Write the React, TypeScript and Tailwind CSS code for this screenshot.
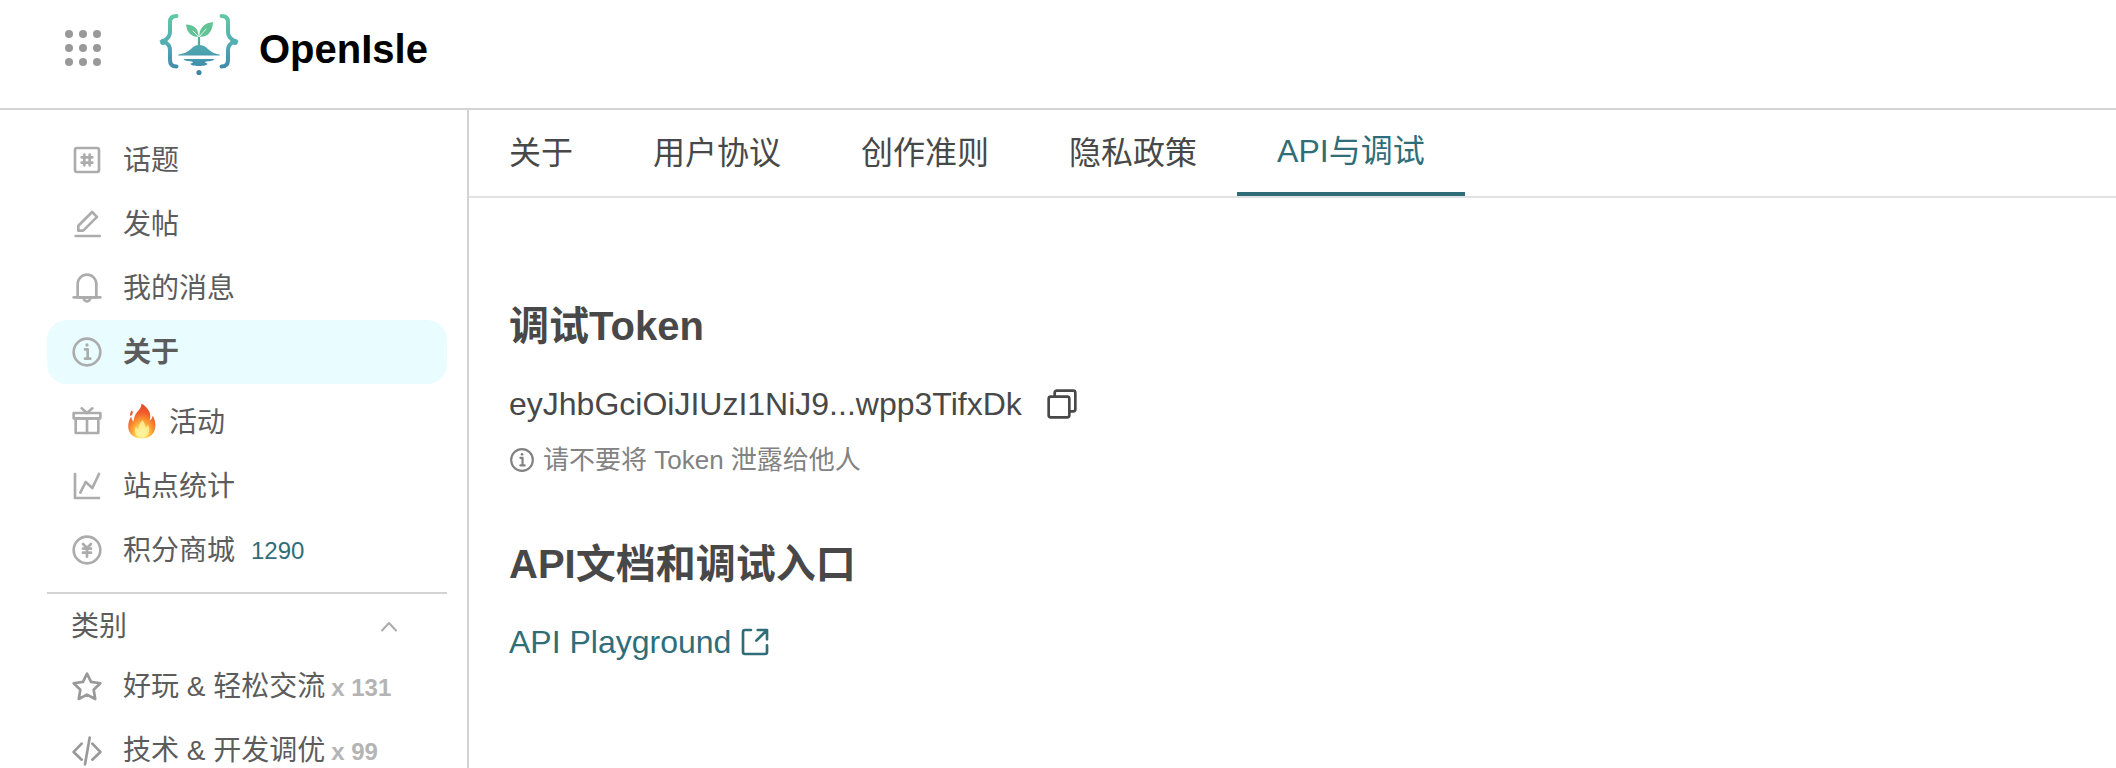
import type { ReactNode } from 'react'

interface IconProps {
  className?: string
  children: ReactNode
}

// 48x48 outline icon, colour follows the text colour
function Icon({ className = 'size-8', children }: IconProps) {
  return (
    <svg
      viewBox="0 0 48 48"
      fill="none"
      stroke="currentColor"
      strokeWidth={4}
      strokeLinecap="round"
      strokeLinejoin="round"
      className={`shrink-0 ${className}`}
      aria-hidden="true"
    >
      {children}
    </svg>
  )
}

const icons = {
  topic: (
    <>
      <rect x="6" y="6" width="36" height="36" rx="3" />
      <path d="M20 16v16M28 16v16M16 20h16M16 28h16" />
    </>
  ),
  edit: (
    <>
      <path d="M7 42h36" />
      <path d="M11 26.7V34h7.3L39 13.3 31.7 6 11 26.7Z" />
    </>
  ),
  bell: (
    <>
      <path d="M24 4c-7.700 0-14 6.300-14 14v20h28V18c0-7.700-6.300-14-14-14Z" />
      <path d="M4 38h40" />
      <path d="M24 44a5 5 0 0 0 5-5v-1H19v1a5 5 0 0 0 5 5Z" />
    </>
  ),
  info: (
    <>
      <circle cx="24" cy="24" r="20" />
      <circle cx="24" cy="13.500" r="2.500" fill="currentColor" stroke="none" />
      <path d="M21 20h4v14M21 34h8" />
    </>
  ),
  gift: (
    <>
      <path d="M41 20H7v22h34V20Z" />
      <path d="M24 20v22" />
      <path d="M4 12h40v8H4Z" />
      <path d="m16 5 8 7 8-7" />
    </>
  ),
  chart: (
    <>
      <path d="M6 6v36h36" />
      <path d="m14 34 8-16 10 9L42 6" />
    </>
  ),
  coin: (
    <>
      <circle cx="24" cy="24" r="20" />
      <path d="M18 22h12M18 28h12M24 22v12M30 15l-6 6-6-6" />
    </>
  ),
  star: (
    <path d="m24 4-6 12.400L4 18.300l10 9.800L11.600 42 24 35.500 36.400 42 34 28.100l10-9.800-14-1.900L24 4Z" />
  ),
  code: <path d="M16 13 4 25.400 16 37M32 13l12 12.400L32 37M28 4l-7 40" />,
}

function Fire() {
  return (
    <svg viewBox="0 0 30 36" className="ml-1 h-9 w-[30px] shrink-0" role="img" aria-label="fire">
      <defs>
        <radialGradient id="flame" cx="0.5" cy="0.88" r="0.8">
          <stop offset="0" stopColor="#fff6a0" />
          <stop offset="0.25" stopColor="#ffd84e" />
          <stop offset="0.5" stopColor="#fb9a35" />
          <stop offset="0.8" stopColor="#ee5a2b" />
          <stop offset="1" stopColor="#e2502b" />
        </radialGradient>
      </defs>
      <path
        fill="url(#flame)"
        d="M14.500.500C20 4 23.500 8.500 23.300 13.500c0 1.500-.3 2.700-.8 4 1.800-.8 2.800-2.500 3.200-5 2 3.500 3 7.500 2.600 11.500C27.700 31 22.300 35.500 15 35.500 7.500 35.500 1.500 31 1.200 24c-.2-4.500 1.600-8 3-10.500.4 2.200 1 3.800 2.300 5.200C7 13 9 10.500 11.500 7.500c2-2.400 3-4.500 3-7ZM4.800 7.500C6 8.200 6 10 5.200 11.500c-.6.800-1.400 1.300-2 1.500C3 11 3.300 9 4.800 7.500Z"
      />
      <path
        fill="#fff3a0"
        opacity="0.8"
        d="M15.500 17c2.500 3 2 5.500 3.500 7.500 1-.6 1.500-1.800 1.700-3 1.800 3 2 6.500.3 9.500-1.300 2.300-3.500 3.500-6 3.500-4 0-7-3-7-7 0-1.500.4-3 1-4 .6 1.600 1.300 2.400 2.500 3 0-4 1.500-7 4-9.500Z"
      />
    </svg>
  )
}

function Logo() {
  return (
    <svg viewBox="0 0 80 64" className="h-16 w-20 shrink-0" aria-hidden="true">
      <defs>
        <linearGradient id="logo" gradientUnits="userSpaceOnUse" x1="0" y1="2" x2="0" y2="62">
          <stop offset="0" stopColor="#62c9a4" />
          <stop offset="0.5" stopColor="#52acb2" />
          <stop offset="1" stopColor="#3b83a8" />
        </linearGradient>
      </defs>
      <g fill="none" stroke="url(#logo)" strokeWidth="4" strokeLinecap="round">
        <path d="M17.500 4C13 4 11 6.500 11 10v10c0 4.500-2.500 7-6.500 9 4 2 6.500 4.500 6.500 9v10c0 4 2 6.500 6.500 6.500" />
        <path d="M62.500 4C67 4 69 6.500 69 10v10c0 4.500 2.500 7 6.500 9-4 2-6.500 4.500-6.500 9v10c0 4-2 6.500-6.500 6.500" />
      </g>
      <g fill="url(#logo)">
        <circle cx="4" cy="30" r="2.900" />
        <circle cx="76" cy="30" r="2.900" />
        <path d="M19 43.500c0-1 1-1.200 3-1.600 6-1.300 8-3.400 11-6 2-1.800 4-2.700 7-2.900 4 0 6.500 1.500 9 3.900 3 2.700 5.500 4.200 9 5 2 .4 3 .6 3 1.600Z" />
        <path d="M24.500 47h31c-.8 1.800-4 2.200-8 2.400-1.500.1-2 1.300-.5 1.600 1 .3 1.500.7 1.500 1-.5 1.300-4 2-8.500 2s-8-.7-8.500-2c0-.4.5-.8 1.500-1 1.500-.4 1-1.500-.5-1.600-4-.2-7.200-.6-8-2.400Z" />
        <circle cx="40" cy="60.500" r="2.600" />
      </g>
      <path d="M40 34v-9" stroke="#52ad9d" strokeWidth="2.200" fill="none" />
      <path
        fill="#62c394"
        d="M39.600 24.800c-6.300.2-11.600-3-12.600-12.300 7.500.3 12.500 3.500 12.600 12.300Z"
      />
      <path fill="#62c394" d="M40.400 24.800c-.4-8.500 4.200-13.600 13.600-14.800-.5 9-4.800 15.600-13.600 14.800Z" />
      <path
        d="m34 19 5.500 5.500M47 17l-6.500 7.500"
        stroke="#e4f6ee"
        strokeWidth="1"
        strokeLinecap="round"
      />
    </svg>
  )
}

interface NavItem {
  label: string
  icon: ReactNode
  active?: boolean
  fire?: boolean
  points?: number
}

const navItems: NavItem[] = [
  { label: '话题', icon: icons.topic },
  { label: '发帖', icon: icons.edit },
  { label: '我的消息', icon: icons.bell },
  { label: '关于', icon: icons.info, active: true },
  { label: '活动', icon: icons.gift, fire: true },
  { label: '站点统计', icon: icons.chart },
  { label: '积分商城', icon: icons.coin, points: 1290 },
]

const categories = [
  { name: '好玩 & 轻松交流', icon: icons.star, count: 131 },
  { name: '技术 & 开发调优', icon: icons.code, count: 99 },
]

const tabs = ['关于', '用户协议', '创作准则', '隐私政策', 'API与调试']
const activeTab = 'API与调试'

function Header() {
  return (
    <header className="flex h-[110px] shrink-0 items-start border-b-2 border-[#d3d3d3] pl-[65px]">
      <button type="button" aria-label="菜单" className="mt-[30px] grid grid-cols-3 gap-1.5">
        {Array.from({ length: 9 }, (_, i) => (
          <span key={i} className="size-2 rounded-full bg-[#999999]" />
        ))}
      </button>
      <a href="#" className="mt-3 ml-[58px] flex gap-5">
        <Logo />
        <span className="mt-2 text-[40px] leading-[58px] font-bold text-black">OpenIsle</span>
      </a>
    </header>
  )
}

function Sidebar() {
  return (
    <aside className="w-[469px] shrink-0 overflow-y-auto border-r-2 border-[#d3d3d3] pt-[18px] pr-5 pl-[47px] text-[28px] text-[#5c5c5c] [scrollbar-width:none]">
      <nav>
        {navItems.map((item) => (
          <a
            key={item.label}
            href="#"
            className={`flex items-center rounded-[20px] px-6 ${item.fire ? 'h-[70px] pt-1' : 'h-16'} ${
              item.active ? 'bg-[#e9fcff] font-bold' : ''
            }`}
          >
            <Icon className="mr-5 size-8 text-[#acacac]">{item.icon}</Icon>
            {item.fire && <Fire />}
            <span className={item.fire ? 'ml-3 pt-1' : 'pt-0.5'}>{item.label}</span>
            {item.points && (
              <span className="ml-4 pt-0.5 text-2xl text-[#2f6e79]">{item.points}</span>
            )}
          </a>
        ))}
      </nav>

      <section className="mt-2.5 border-t-2 border-[#d3d3d3]">
        <button type="button" className="flex h-[61px] w-full items-center justify-between pt-1 pr-[46px] pl-6">
          类别
          <Icon className="size-6 text-[#acacac]">
            <path d="m10 31 14-15 14 15" />
          </Icon>
        </button>
        {categories.map((category) => (
          <a key={category.name} href="#" className="flex h-16 items-center px-6">
            <Icon className="mr-5 size-8 text-[#999999]">{category.icon}</Icon>
            <span>{category.name}</span>
            <span className="ml-1.5 pt-0.5 text-2xl font-bold text-[#b4b4b4]">x {category.count}</span>
          </a>
        ))}
      </section>
    </aside>
  )
}

export default function App() {
  return (
    <div
      lang="zh-CN"
      className="flex h-screen flex-col overflow-hidden bg-white font-['Liberation_Sans','Noto_Sans_CJK_SC',sans-serif]"
    >
      <Header />
      <div className="flex min-h-0 flex-1">
        <Sidebar />
        <main className="min-w-0 flex-1 text-[#484848]">
          <div role="tablist" className="flex h-[88px] border-b-2 border-[#e2e2e2]">
            {tabs.map((tab) => (
              <button
                key={tab}
                type="button"
                role="tab"
                aria-selected={tab === activeTab}
                className={`px-10 text-[32px] whitespace-nowrap ${
                  tab === activeTab ? 'border-b-4 border-[#2f6e79] text-[#2f6e79]' : ''
                }`}
              >
                {tab}
              </button>
            ))}
          </div>

          <div className="px-10 pt-[98px]">
            <h2 className="text-[40px] leading-[60px] font-bold">调试Token</h2>
            <div className="mt-6 flex items-center gap-6 text-[32px] leading-[48px]">
              <span>eyJhbGciOiJIUzI1NiJ9...wpp3TifxDk</span>
              <button type="button" aria-label="复制">
                <Icon>
                  <path d="M13 12.400V7.200C13 5.400 14.400 4 16.200 4h24.600C42.600 4 44 5.400 44 7.200v24.600c0 1.800-1.400 3.200-3.200 3.200h-5.200" />
                  <rect x="4" y="13" width="31" height="31" rx="3.200" />
                </Icon>
              </button>
            </div>
            <p className="mt-3 flex items-center gap-2 text-[26px] leading-[40px] text-[#828282]">
              <Icon className="size-[26px]">{icons.info}</Icon>
              请不要将 Token 泄露给他人
            </p>

            <h2 className="mt-[54px] text-[40px] leading-[60px] font-bold">API文档和调试入口</h2>
            <a
              href="#"
              className="mt-6 inline-flex items-center gap-2 text-[32px] leading-[48px] text-[#2f6e79]"
            >
              API Playground
              <Icon>
                <path d="M28 6h14v14M42 29v10a3 3 0 0 1-3 3H9a3 3 0 0 1-3-3V9a3 3 0 0 1 3-3h9M26 22 41 7" />
              </Icon>
            </a>
          </div>
        </main>
      </div>
    </div>
  )
}
